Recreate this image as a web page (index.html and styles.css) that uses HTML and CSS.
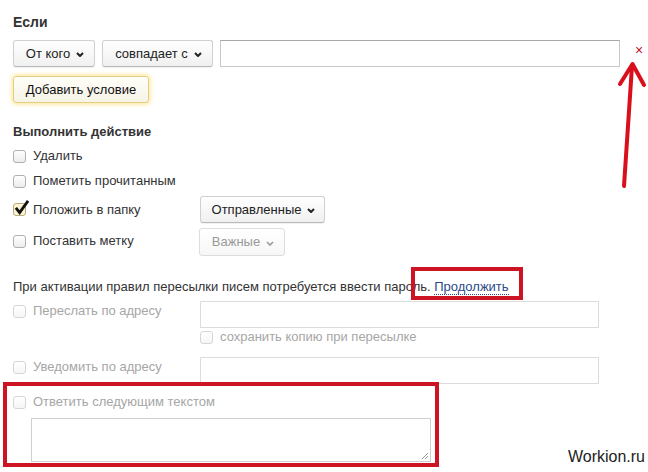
FILE: index.html
```html
<!DOCTYPE html>
<html lang="ru">
<head>
<meta charset="utf-8">
<link rel="stylesheet" href="styles.css">
</head>
<body>
<div class="page">
  <div class="heading heading-if">Если</div>
  <div class="cond-row">
    <span class="btn btn-from">От кого <svg class="chev" viewBox="0 0 8 5"><path d="M1 1l3 3 3-3"/></svg></span>
    <span class="btn btn-match">совпадает с <svg class="chev" viewBox="0 0 8 5"><path d="M1 1l3 3 3-3"/></svg></span>
    <span class="input cond-input"></span>
    <span class="remove">×</span>
  </div>
  <div class="add-row"><span class="btn btn-add">Добавить условие</span></div>

  <div class="heading heading-do">Выполнить действие</div>
  <div class="actions">
    <div class="act"><span class="cb"></span><span class="lbl">Удалить</span></div>
    <div class="act"><span class="cb"></span><span class="lbl">Пометить прочитанным</span></div>
    <div class="act act-dd">
      <div class="act-label"><span class="cb cb-checked"><svg class="tick" viewBox="0 0 16 16"><path d="M2 8.5l4 5L15 1"/></svg></span><span class="lbl">Положить в папку</span></div>
      <span class="btn btn-folder">Отправленные <svg class="chev" viewBox="0 0 8 5"><path d="M1 1l3 3 3-3"/></svg></span>
    </div>
    <div class="act act-dd act-mark">
      <div class="act-label"><span class="cb"></span><span class="lbl">Поставить метку</span></div>
      <span class="btn btn-disabled">Важные <svg class="chev" viewBox="0 0 8 5"><path d="M1 1l3 3 3-3"/></svg></span>
    </div>
  </div>

  <div class="info">При активации правил пересылки писем потребуется ввести пароль. <a class="link">Продолжить</a></div>

  <div class="fwd-row">
    <div class="fwd-label"><span class="cb cb-dis"></span><span class="lbl dis">Переслать по адресу</span></div>
    <div class="fwd-field">
      <span class="input input-dis"></span>
      <div class="save"><span class="cb cb-dis"></span><span class="lbl dis">сохранить копию при пересылке</span></div>
    </div>
  </div>
  <div class="fwd-row notify-row">
    <div class="fwd-label"><span class="cb cb-dis"></span><span class="lbl dis">Уведомить по адресу</span></div>
    <div class="fwd-field"><span class="input input-dis"></span></div>
  </div>

  <div class="reply"><span class="cb cb-dis"></span><span class="lbl dis">Ответить следующим текстом</span></div>
  <div class="textarea"><svg class="grip" viewBox="0 0 8 8"><path d="M7 1L1 7M7 4L4 7"/></svg></div>

  <div class="hl hl-link"></div>
  <div class="hl hl-reply"></div>
  <svg class="arrow" viewBox="0 0 648 472"><path d="M624 186L632 66"/><path d="M620 84L632.5 64L644 85"/></svg>
  <div class="wm">Workion.ru</div>
</div>
</body>
</html>
```
FILE: styles.css
```css
* { box-sizing: border-box; }
html, body { margin: 0; padding: 0; background: #fff; }
body {
  font-family: "Liberation Sans", Arial, sans-serif;
  font-size: 13px;
  line-height: 16px;
  color: #333;
}
.page {
  position: relative;
  width: 648px;
  height: 472px;
  padding: 14px 0 0 13px;
  overflow: hidden;
}
.heading { font-weight: bold; color: #333; }
.heading-if { font-size: 14px; }
.cond-row {
  margin-top: 10px;
  display: flex;
  align-items: center;
  gap: 7px;
  height: 27px;
}
.btn {
  display: inline-flex;
  align-items: center;
  justify-content: center;
  height: 27px;
  padding: 0 8px 0 10px;
  border: 1px solid #d0d0d0;
  border-bottom-color: #b8b8b8;
  border-radius: 3px;
  background: linear-gradient(#ffffff, #f0f0f0);
  color: #222;
  white-space: nowrap;
  box-shadow: 0 1px 1px rgba(0,0,0,0.06);
}
.btn-from { width: 82px; }
.btn-match { width: 111px; }
.chev {
  width: 8px;
  height: 5px;
  margin-left: 6px;
  margin-top: 2px;
  fill: none;
  stroke: #222;
  stroke-width: 2;
}
.input {
  display: block;
  height: 27px;
  border: 1px solid #c8c8c8;
  border-top-color: #a8a8a8;
  background: #fff;
}
.cond-input { width: 400px; }
.remove {
  margin-left: 8px;
  color: #c8102e;
  font-size: 14px;
  line-height: 14px;
  margin-top: -7px;
}
.add-row { margin-top: 9px; display: flex; }
.btn-add {
  width: 136px;
  padding: 0 6px;
  border-color: #e0cf86;
  background: linear-gradient(#fffef8, #f6f3e6);
  box-shadow: 0 0 4px 1px rgba(255, 205, 40, 0.55);
  color: #111;
}
.heading-do { margin-top: 21px; }
.actions {
  margin-top: 6px;
  display: flex;
  flex-direction: column;
  gap: 5px;
}
.act { display: flex; align-items: center; height: 20px; }
.act-dd { height: 27px; }
.act-mark { height: 28px; }
.act-label { width: 187px; display: flex; align-items: center; }
.act-mark .act-label { margin-top: -2px; }
.btn-folder { width: 125px; }
.btn-disabled {
  width: 86px;
  margin-left: -1px;
  height: 28px;
  color: #999;
  border-color: #ddd;
  background: linear-gradient(#fff, #f7f7f7);
  box-shadow: none;
}
.btn-disabled .chev { stroke: #999; stroke-width: 1.6; }
.cb {
  position: relative;
  flex: none;
  width: 13px;
  height: 13px;
  border: 1px solid #b0b0b0;
  border-radius: 3px;
  background: linear-gradient(#fff, #ececec);
  margin-right: 7px;
}
.cb-checked { background: #fbf3d0; border-color: #b8aa80; }
.tick {
  position: absolute;
  left: 0;
  top: -4px;
  width: 15px;
  height: 15px;
  fill: none;
  stroke: #111;
  stroke-width: 3;
}
.cb-dis { border-color: #d6d6d6; background: linear-gradient(#fff, #f6f6f6); }
.lbl { color: #333; white-space: nowrap; }
.dis { color: #a6a6a6; }
.info { margin-top: 23px; color: #333; white-space: nowrap; }
.link {
  color: #2a4a8a;
  text-decoration: none;
  border-bottom: 1px dotted #2a4a8a;
}
.fwd-row { margin-top: 6px; display: flex; }
.fwd-label { width: 187px; display: flex; align-items: center; height: 16px; margin-top: 2px; }
.fwd-field { display: flex; flex-direction: column; }
.fwd-field .input { width: 399px; }
.input-dis { border-color: #dcdcdc; }
.save { display: flex; align-items: center; margin-top: 1px; height: 16px; }
.notify-row { margin-top: 12px; }
.reply { margin-top: 10px; display: flex; align-items: center; height: 16px; }
.textarea {
  position: relative;
  margin: 8px 0 0 18px;
  width: 400px;
  height: 44px;
  border: 1px solid #cfcfcf;
  background: #fff;
}
.grip {
  position: absolute;
  right: 1px;
  bottom: 1px;
  width: 8px;
  height: 8px;
  fill: none;
  stroke: #999;
  stroke-width: 1;
}
.hl {
  position: absolute;
  border: 4px solid #cc1424;
}
.hl-link { left: 411px; top: 267px; width: 112px; height: 33px; }
.hl-reply { left: 3px; top: 382px; width: 436px; height: 85px; }
.arrow {
  position: absolute;
  left: 0;
  top: 0;
  width: 648px;
  height: 472px;
  fill: none;
  stroke: #d9101c;
  stroke-width: 4;
  stroke-linecap: round;
  stroke-linejoin: round;
  pointer-events: none;
}
.wm {
  position: absolute;
  right: 3px;
  bottom: 6px;
  font-size: 16px;
  line-height: 18px;
  color: #222;
}
```
